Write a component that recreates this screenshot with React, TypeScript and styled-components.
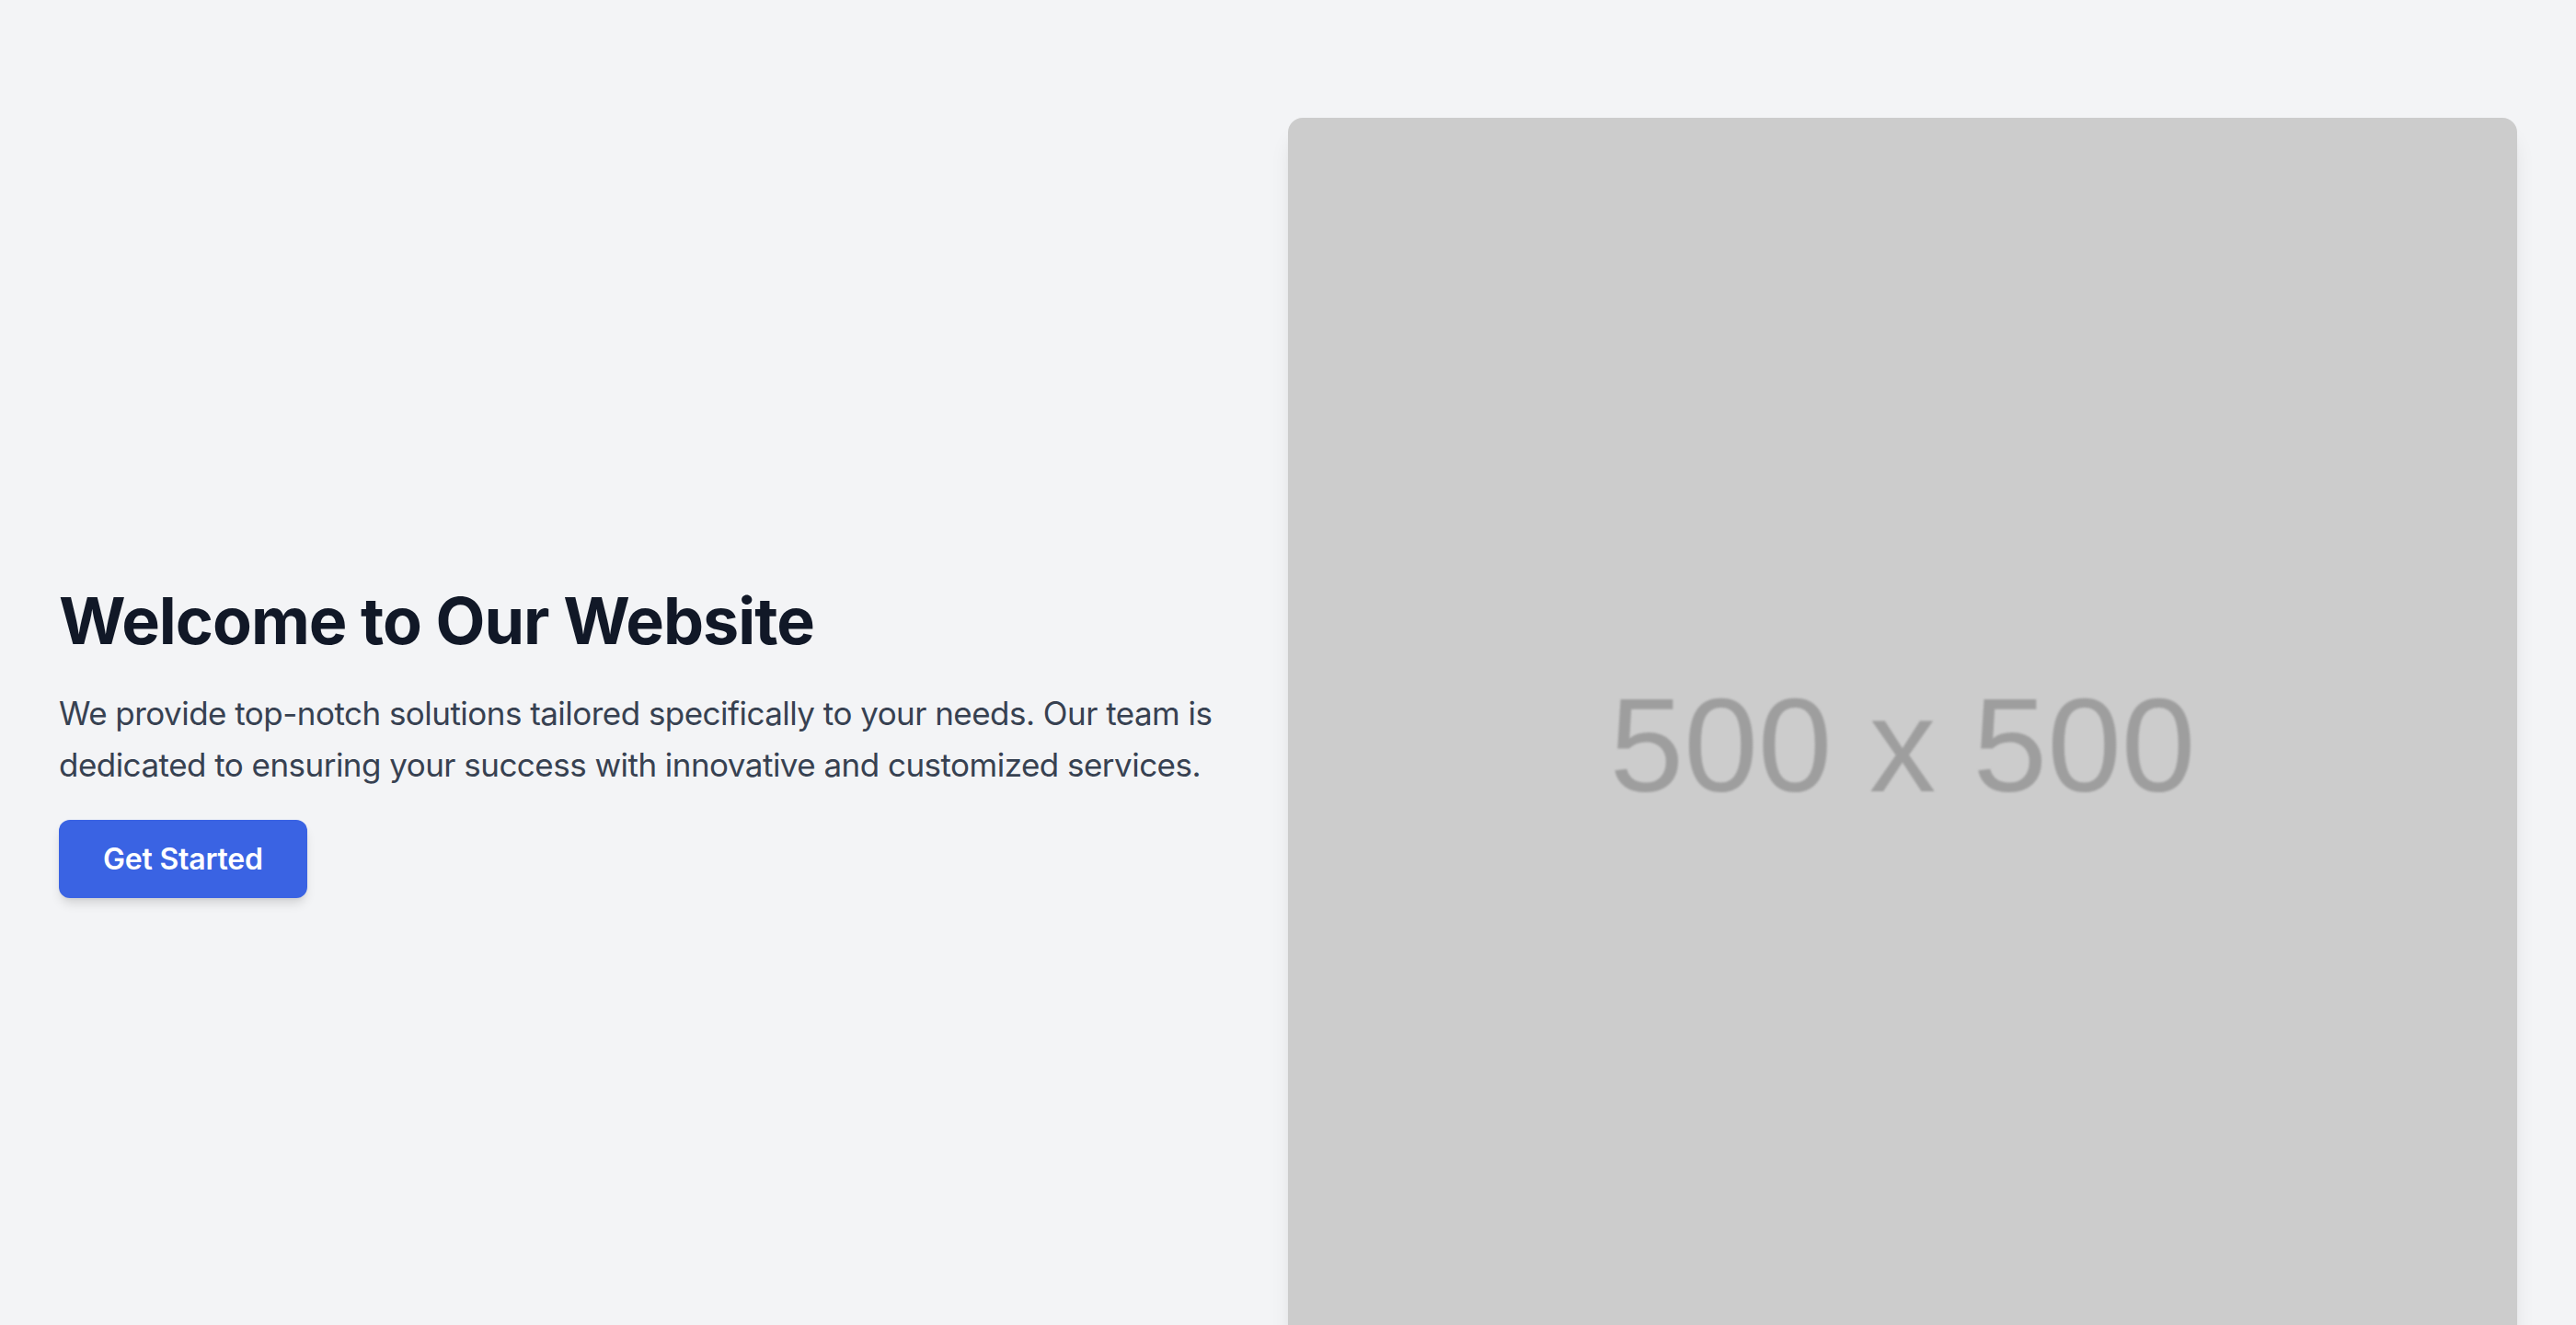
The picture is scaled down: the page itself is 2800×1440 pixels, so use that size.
import React from "react";
import styled, { createGlobalStyle } from "styled-components";

const GlobalStyle = createGlobalStyle`
  html, body {
    margin: 0;
    padding: 0;
    background: #f3f4f6;
    overflow: hidden;
  }
  * { box-sizing: border-box; }
`;

const Page = styled.main`
  min-height: 1440px;
  background: #f3f4f6;
  padding: 128px 64px 0;
  font-family: Inter, "Noto Sans", sans-serif;
`;

const Hero = styled.section`
  display: grid;
  grid-template-columns: 1fr 1fr;
  align-items: center;
`;

const TextColumn = styled.div`
  display: flex;
  flex-direction: column;
  align-items: flex-start;
  padding-right: 64px;
  padding-top: 18px;
`;

const Title = styled.h1`
  margin: 0 0 32px;
  font-size: 70px;
  line-height: 80px;
  font-weight: 700;
  letter-spacing: -1px;
  color: #111827;
`;

const Lead = styled.p`
  margin: 0 0 32px;
  font-size: 35px;
  line-height: 56px;
  font-weight: 400;
  letter-spacing: -0.53px;
  color: #374151;
`;

const CtaButton = styled.button`
  display: inline-flex;
  align-items: center;
  justify-content: center;
  height: 85px;
  padding: 0 48px;
  border: none;
  border-radius: 12px;
  background: #3a63e3;
  color: #ffffff;
  font-family: Inter, "Noto Sans", sans-serif;
  font-size: 32px;
  font-weight: 600;
  letter-spacing: -0.2px;
  box-shadow: 0 8px 12px -2px rgba(0, 0, 0, 0.12), 0 4px 6px -4px rgba(0, 0, 0, 0.1);
  cursor: pointer;
`;

const ImageCard = styled.div`
  height: 1336px;
  border-radius: 16px;
  background: #cccccc;
  box-shadow: 0 20px 25px -5px rgba(0, 0, 0, 0.1), 0 8px 10px -6px rgba(0, 0, 0, 0.1);
  display: flex;
  align-items: center;
  justify-content: center;
  padding-top: 28px;
  overflow: hidden;
`;

const PlaceholderLabel = styled.span`
  font-family: "Liberation Sans", Arial, sans-serif;
  font-size: 145px;
  color: #9e9e9e;
  filter: blur(0.8px);
`;

export default function App() {
  return (
    <>
      <GlobalStyle />
      <Page>
        <Hero>
          <TextColumn>
            <Title>Welcome to Our Website</Title>
            <Lead>
              We provide top-notch solutions tailored specifically to your needs. Our team is
              dedicated to ensuring your success with innovative and customized services.
            </Lead>
            <CtaButton>Get Started</CtaButton>
          </TextColumn>
          <ImageCard>
            <PlaceholderLabel>500 x 500</PlaceholderLabel>
          </ImageCard>
        </Hero>
      </Page>
    </>
  );
}
